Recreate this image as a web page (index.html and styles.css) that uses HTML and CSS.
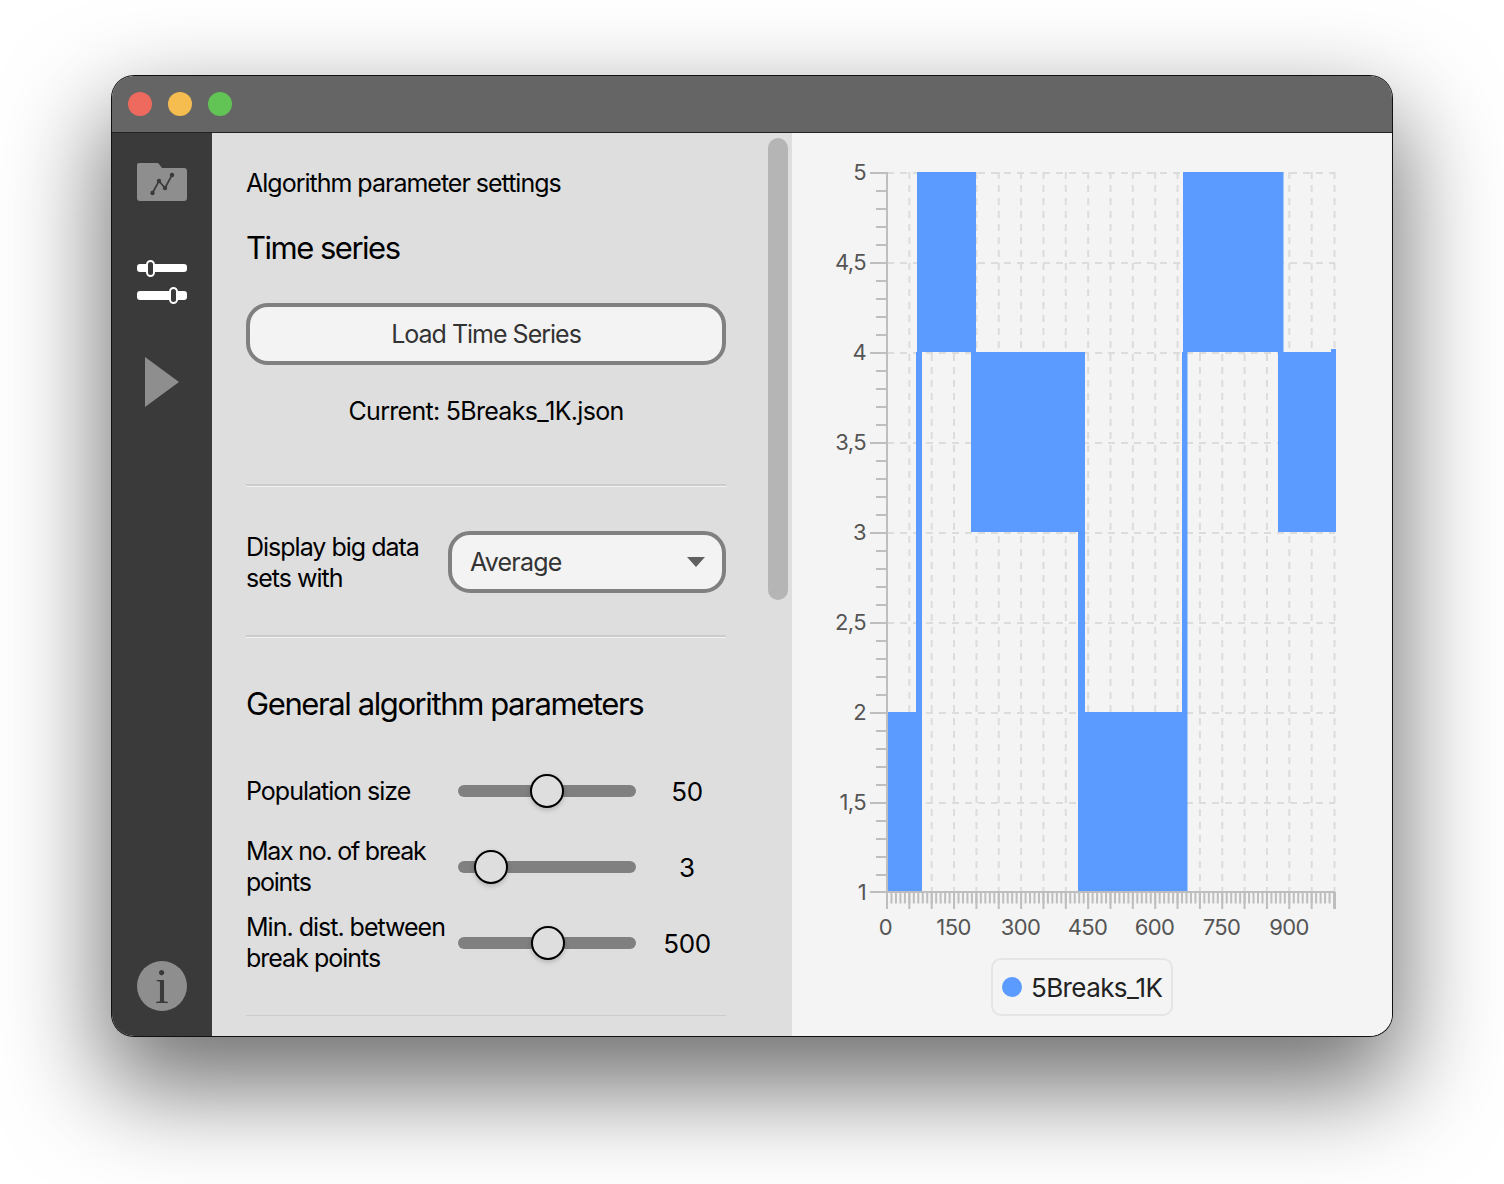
FILE: index.html
```html
<!DOCTYPE html>
<html lang="en">
<head>
<meta charset="utf-8">
<title>Algorithm parameter settings</title>
<link rel="stylesheet" href="styles.css">
</head>
<body>
<main class="window">
  <header class="titlebar">
    <span class="light light-red"></span>
    <span class="light light-yellow"></span>
    <span class="light light-green"></span>
  </header>
  <div class="content">
    <nav class="sidebar">
      <svg class="icon-folder" width="50" height="38" viewBox="0 0 50 38">
        <path d="M2 0H20a3 3 0 0 1 2 1l3 4H47a3 3 0 0 1 3 3V35a3 3 0 0 1-3 3H3a3 3 0 0 1-3-3V2a2 2 0 0 1 2-2Z" fill="#8e8e8e"/>
        <path d="M15.5 30L22 18L28 25L35 12" fill="none" stroke="#3a3a3a" stroke-width="1.6"/>
        <circle cx="15.5" cy="30" r="2.2" fill="#3a3a3a"/><circle cx="22" cy="18" r="2.2" fill="#3a3a3a"/>
        <circle cx="28" cy="25" r="2.2" fill="#3a3a3a"/><circle cx="35" cy="12" r="2.2" fill="#3a3a3a"/>
      </svg>
      <svg class="icon-sliders" width="50" height="45" viewBox="0 0 50 45">
        <rect x="0" y="4" width="50" height="8" rx="3" fill="#fff"/>
        <rect x="0" y="31" width="50" height="9" rx="3" fill="#fff"/>
        <rect x="10" y="1" width="7" height="15" rx="3.5" fill="#3a3a3a" stroke="#fff" stroke-width="2"/>
        <rect x="33" y="28" width="7" height="15" rx="3.5" fill="#3a3a3a" stroke="#fff" stroke-width="2"/>
      </svg>
      <svg class="icon-play" width="34" height="50" viewBox="0 0 34 50"><path d="M0 0L34 25L0 50Z" fill="#8e8e8e"/></svg>
      <span class="icon-info">i</span>
    </nav>
    <section class="panel">
      <h1 class="panel-title">Algorithm parameter settings</h1>
      <h2 class="section-title">Time series</h2>
      <button class="btn">Load Time Series</button>
      <p class="current">Current: 5Breaks_1K.json</p>
      <hr class="sep sep-a">
      <div class="display-row">
        <span class="label">Display big data sets with</span>
        <div class="select"><span>Average</span><i class="caret"></i></div>
      </div>
      <hr class="sep sep-b">
      <h2 class="section-title general">General algorithm parameters</h2>
      <div class="param">
        <span class="label">Population size</span>
        <div class="track"><span class="thumb" style="left:72px"></span></div>
        <span class="value">50</span>
      </div>
      <div class="param">
        <span class="label label-tight">Max no. of break points</span>
        <div class="track"><span class="thumb" style="left:16px"></span></div>
        <span class="value">3</span>
      </div>
      <div class="param">
        <span class="label">Min. dist. between break points</span>
        <div class="track"><span class="thumb" style="left:73px"></span></div>
        <span class="value">500</span>
      </div>
      <hr class="sep sep-c">
      <div class="scrollbar"></div>
    </section>
    <section class="chart">
      <svg class="plot" width="600" height="825" viewBox="792 133 600 825">
        <path class="grid" d="M909.35 172V892M931.7 172V892M954.05 172V892M976.4 172V892M998.75 172V892M1021.1 172V892M1043.45 172V892M1065.8 172V892M1088.15 172V892M1110.5 172V892M1132.85 172V892M1155.2 172V892M1177.55 172V892M1199.9 172V892M1222.25 172V892M1244.6 172V892M1266.95 172V892M1289.3 172V892M1311.65 172V892M1334.5 172V892"/>
        <path class="grid" d="M887 173H1335M887 263H1335M887 353H1335M887 443H1335M887 533H1335M887 623H1335M887 713H1335M887 803H1335"/>
        <path class="series" d="M887 892V712H916V352H917V172H976V352H1085V712H1182V352H1183V172H1283.5V352H1331V349H1336V532H1278V352H1187.5V892H1078V532H971V352H922V892Z"/>
        <path class="axis" d="M887 172V909M870 892H1335M1335 892V909"/>
        <path class="axis" d="M870 173H887M870 263H887M870 353H887M870 443H887M870 533H887M870 623H887M870 713H887M870 803H887"/>
        <path class="axis" d="M876 191H887M876 209H887M876 227H887M876 245H887M876 281H887M876 299H887M876 317H887M876 335H887M876 371H887M876 389H887M876 407H887M876 425H887M876 461H887M876 479H887M876 497H887M876 515H887M876 551H887M876 569H887M876 587H887M876 605H887M876 641H887M876 659H887M876 677H887M876 695H887M876 731H887M876 749H887M876 767H887M876 785H887M876 821H887M876 839H887M876 857H887M876 875H887"/>
        <line class="ticks-minor" x1="886" y1="898" x2="1335" y2="898"/>
        <line class="ticks-major" x1="886" y1="901" x2="1335" y2="901"/>
        <g class="ylabels">
          <text x="866" y="180">5</text><text x="866" y="270">4,5</text><text x="866" y="360">4</text>
          <text x="866" y="450">3,5</text><text x="866" y="540">3</text><text x="866" y="630">2,5</text>
          <text x="866" y="720">2</text><text x="866" y="810">1,5</text><text x="866" y="900">1</text>
        </g>
        <g class="xlabels">
          <text x="885.5" y="935">0</text><text x="953.5" y="935">150</text><text x="1020.5" y="935">300</text>
          <text x="1087.5" y="935">450</text><text x="1154.5" y="935">600</text><text x="1221.5" y="935">750</text>
          <text x="1289" y="935">900</text>
        </g>
      </svg>
      <div class="legend"><span class="legend-dot"></span><span>5Breaks_1K</span></div>
    </section>
  </div>
</main>
</body>
</html>
```
FILE: styles.css
```css
* { box-sizing: border-box; }
html, body { margin: 0; height: 100%; }
body {
  background: #fff;
  padding: 76px 112px 148px;
  font-family: Inter, "Liberation Sans", sans-serif;
  color: #000;
}
.window {
  width: 1280px;
  height: 960px;
  border-radius: 22px;
  overflow: hidden;
  display: flex;
  flex-direction: column;
  box-shadow: 0 0 0 1px #111, 0 44px 100px 8px rgba(0,0,0,.56);
}
.titlebar {
  height: 57px;
  flex: none;
  background: #656565;
  border-bottom: 1px solid #222;
  display: flex;
  align-items: center;
  gap: 16px;
  padding-left: 16px;
}
.light { width: 24px; height: 24px; border-radius: 50%; }
.light-red { background: #ee6a5f; }
.light-yellow { background: #f5bd4f; }
.light-green { background: #61c454; }
.content { flex: 1; display: flex; min-height: 0; }

.sidebar {
  width: 100px;
  flex: none;
  background: #3a3a3a;
  display: flex;
  flex-direction: column;
  align-items: center;
  padding-top: 30px;
}
.icon-sliders { margin-top: 59px; }
.icon-play { margin-top: 52px; margin-left: -1px; }
.icon-info {
  margin-top: auto;
  margin-bottom: 25px;
  width: 50px;
  height: 50px;
  border-radius: 50%;
  background: #8e8e8e;
  color: #3a3a3a;
  font: 50px/50px "Liberation Serif", serif;
  text-align: center;
}

.panel {
  position: relative;
  width: 580px;
  flex: none;
  background: #dedede;
  padding: 0 66px 0 34px;
  overflow: hidden;
}
.panel-title {
  margin: 33px 0 0;
  font-size: 25px;
  line-height: 34px;
  font-weight: 400;
  letter-spacing: -1px;
}
.section-title {
  margin: 0;
  font-size: 31px;
  line-height: 40px;
  font-weight: 400;
  letter-spacing: -1.5px;
}
.panel-title + .section-title { margin-top: 28px; }
.btn {
  display: block;
  width: 480px;
  height: 62px;
  margin-top: 35px;
  border: 4px solid #808080;
  border-radius: 22px;
  background: #f3f3f3;
  font: 400 25px Inter, sans-serif;
  letter-spacing: -1px;
  color: #333;
}
.current {
  margin: 29px 0 0;
  font-size: 25px;
  line-height: 34px;
  letter-spacing: -.7px;
  text-align: center;
}
.sep {
  margin: 0;
  height: 3px;
  border: 0;
  border-top: 2px solid #ccc;
  border-bottom: 1px solid #f2f2f2;
  width: 480px;
}
.sep-a { margin-top: 56px; }
.sep-b { margin-top: 42px; }
.sep-c { margin-top: 34px; border-bottom: 0; height: 2px; border-top-width: 1px; }
.display-row {
  display: flex;
  align-items: center;
  justify-content: space-between;
  margin-top: 44px;
}
.label {
  font-size: 25px;
  line-height: 31px;
  letter-spacing: -1px;
  color: #000;
}
.label-tight { letter-spacing: -1.25px; }
.display-row .label { width: 190px; padding-top: 1px; margin-bottom: -1px; }
.select {
  width: 278px;
  height: 62px;
  border: 4px solid #808080;
  border-radius: 22px;
  background: #f3f3f3;
  display: flex;
  align-items: center;
  justify-content: space-between;
  padding: 0 17px 0 18px;
  font-size: 25px;
  letter-spacing: -.8px;
  color: #333;
}
.caret {
  width: 0;
  height: 0;
  border-left: 9px solid transparent;
  border-right: 9px solid transparent;
  border-top: 10px solid #606060;
}
.section-title.general { margin-top: 46px; letter-spacing: -1.4px; }
.param {
  display: grid;
  grid-template-columns: 212px 178px 1fr;
  align-items: center;
  height: 76px;
}
.section-title.general + .param { margin-top: 29px; }
.track {
  position: relative;
  height: 12px;
  border-radius: 6px;
  background: #808080;
}
.thumb {
  position: absolute;
  top: -11px;
  width: 34px;
  height: 34px;
  border: 2px solid #000;
  border-radius: 50%;
  background: #dedede;
  box-shadow: 0 2px 5px rgba(0,0,0,.2);
}
.value {
  text-align: center;
  font-size: 26px;
  letter-spacing: -.3px;
  padding-left: 12px;
}
.scrollbar {
  position: absolute;
  top: 5px;
  right: 4px;
  width: 20px;
  height: 462px;
  border-radius: 10px;
  background: #b5b5b5;
}

.chart {
  flex: 1;
  background: #f4f4f4;
  display: flex;
  flex-direction: column;
  align-items: center;
}
.plot { display: block; flex: none; }
.grid { fill: none; stroke: #dcdcdc; stroke-width: 2; stroke-dasharray: 7 6; }
.series { fill: #5b9bff; }
.axis { fill: none; stroke: #bebebe; stroke-width: 2; }
.ticks-minor { stroke: #bebebe; stroke-width: 11; stroke-dasharray: 2 2.47; }
.ticks-major { stroke: #bebebe; stroke-width: 16; stroke-dasharray: 2 20.35; }
.ylabels text, .xlabels text { font-size: 22px; fill: #555; letter-spacing: -.6px; }
.ylabels text { text-anchor: end; }
.xlabels text { text-anchor: middle; }
.legend {
  height: 58px;
  width: 182px;
  margin-right: 20px;
  border: 2px solid #e5e5e5;
  border-radius: 10px;
  display: flex;
  align-items: center;
  gap: 9px;
  padding-left: 9px;
  font-size: 26px;
  letter-spacing: -.6px;
  color: #222;
}
.legend-dot { width: 20px; height: 20px; border-radius: 50%; background: #5b9bff; flex: none; }
```
